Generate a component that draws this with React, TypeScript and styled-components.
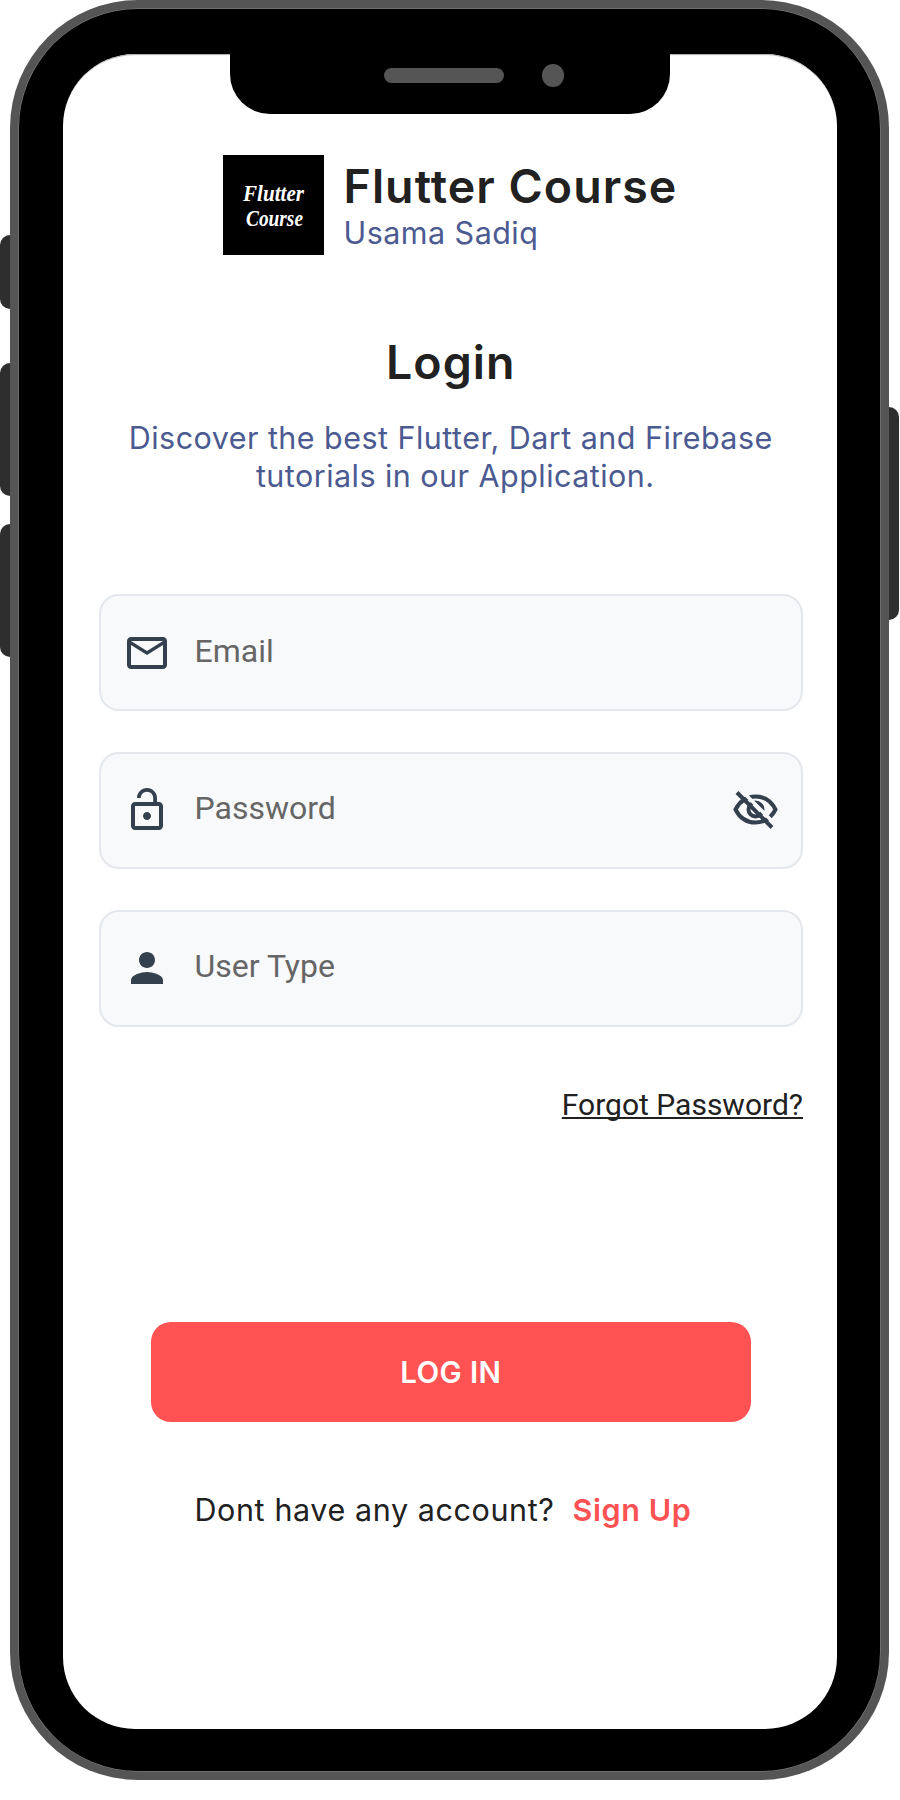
import React from "react";
import styled, { createGlobalStyle } from "styled-components";
import { MdOutlineEmail, MdLockOpen, MdPerson } from "react-icons/md";

const GlobalStyle = createGlobalStyle`
  * { box-sizing: border-box; }
  body { margin: 0; background: #fff; font-family: Roboto, "Liberation Sans", sans-serif; }
  p, h1, h2 { margin: 0; }
`;

const brandFont = `Inter, Roboto, sans-serif`;

const Stage = styled.main`
  position: relative;
  width: 900px;
  height: 1800px;
  padding-left: 9.5px;
  overflow: hidden;
`;

const SideButton = styled.span<{ $side: "left" | "right"; $top: number; $length: number }>`
  position: absolute;
  ${(p) => p.$side}: ${(p) => (p.$side === "left" ? "0" : "1px")};
  top: ${(p) => p.$top}px;
  width: 20px;
  height: ${(p) => p.$length}px;
  border-radius: 10px;
  background: #2e2e2e;
`;

const Phone = styled.div`
  position: relative;
  width: 879.5px;
  height: 1779.5px;
  padding: 9px;
  border-radius: 128px;
  background: #555;
`;

const Bezel = styled.div`
  height: 1761.5px;
  padding: 44.5px 43.5px 41.5px 44.5px;
  border-radius: 119px;
  background: #000;
  box-shadow: 0 0 0 0.5px #858585;
`;

const Screen = styled.div`
  position: relative;
  height: 1675.5px;
  padding: 101.5px 33.5px 0 35.5px;
  border-radius: 72px;
  background: #fff;
  display: flex;
  flex-direction: column;
  box-shadow: inset 0 2px 1px -1px #aaa;
`;

const Notch = styled.div`
  position: absolute;
  left: 166.5px;
  top: -2px;
  width: 440.5px;
  height: 62px;
  border-radius: 0 0 40px 40px;
  background: #000;
  display: flex;
  align-items: flex-start;
  padding: 16.5px 0 0 154px;
`;

const Speaker = styled.span`
  width: 120px;
  height: 15px;
  border-radius: 8px;
  background: #555;
`;

const Camera = styled.span`
  width: 22.5px;
  height: 22.5px;
  margin: -4px 0 0 38px;
  border-radius: 50%;
  background: #555;
`;

const Brand = styled.header`
  display: flex;
  height: 100px;
  padding-left: 124px;
`;

const Logo = styled.svg`
  width: 101px;
  height: 100px;
  background: #000;
  flex: none;
`;

const BrandText = styled.div`
  margin-left: 20px;
  padding-top: 3px;
  white-space: nowrap;
`;

const Heading = styled.h1`
  color: #212121;
  font-family: ${brandFont};
  font-size: 46.5px;
  line-height: 56px;
  font-weight: 600;
  letter-spacing: 1.05px;
`;

const Subtitle = styled.p`
  color: #4b5a91;
  font-family: ${brandFont};
  font-size: 30.5px;
  line-height: 38px;
  letter-spacing: 0.46px;
`;

const Intro = styled.section`
  margin-top: 79px;
  text-align: center;
  white-space: nowrap;
`;

const Description = styled(Subtitle)`
  margin-top: 29px;
`;

const ClosingLine = styled.span`
  padding-left: 9px;
`;

const Form = styled.form`
  margin-top: 99px;
  display: flex;
  flex-direction: column;
  gap: 40.5px;
`;

const Field = styled.label`
  height: 117.3px;
  border: 2px solid #e4e7eb;
  border-radius: 20px;
  background: #f8f9fb;
  color: #34404d;
  display: flex;
  align-items: center;
  padding: 0 22px;
`;

const FieldText = styled.span`
  flex: 1;
  margin: -4px 0 0 24px;
  color: #666;
  font-size: 32px;
  line-height: 40px;
`;

const Forgot = styled.a`
  align-self: flex-end;
  margin-top: 59px;
  color: #212121;
  font-size: 30px;
  line-height: 38px;
  text-decoration: underline;
  text-decoration-thickness: 1.5px;
  text-decoration-skip-ink: none;
  text-underline-offset: 2px;
`;

const Submit = styled.button`
  align-self: center;
  width: 600px;
  height: 100px;
  margin-top: 198px;
  border: 0;
  border-radius: 20px;
  background: #ff5353;
  color: #fff;
  font: 600 29.5px/38px ${brandFont};
  letter-spacing: 0.4px;
`;

const SignUpRow = styled.p`
  margin-top: 69px;
  padding-left: 96px;
  display: flex;
  gap: 18px;
  color: #212121;
  font-family: ${brandFont};
  font-size: 30.5px;
  line-height: 38px;
  white-space: nowrap;
  letter-spacing: 0.6px;
`;

const SignUp = styled.a`
  color: #ff5353;
  font-weight: 600;
`;

function HiddenEye() {
  return (
    <svg width="48" height="48" viewBox="0 0 48 48" fill="none" stroke="currentColor" strokeWidth="4">
      <mask id="slash-gap">
        <path d="M-4 -4H52V52H-4Z" fill="#fff" stroke="none" />
        <path d="M6 0L50 44" stroke="#000" strokeWidth="3.5" />
      </mask>
      <g mask="url(#slash-gap)">
        <path d="M4.500 23.500Q11 10.500 24.500 10.500Q38 10.500 44.500 23.500Q38 36.500 24.500 36.500Q11 36.500 4.500 23.500Z" />
        <circle cx="24.500" cy="23.500" r="7" />
        <path d="M26 17A6.500 6.500 0 0 1 31 23Z" fill="currentColor" stroke="none" />
      </g>
      <path d="M6 6.500L41 41.500" />
    </svg>
  );
}

export default function App() {
  return (
    <>
      <GlobalStyle />
      <Stage>
        <SideButton $side="left" $top={235} $length={74} />
        <SideButton $side="left" $top={363} $length={132.500} />
        <SideButton $side="left" $top={524} $length={132.500} />
        <SideButton $side="right" $top={406.500} $length={213} />
        <Phone>
          <Bezel>
            <Screen>
              <Notch>
                <Speaker />
                <Camera />
              </Notch>
              <Brand>
                <Logo viewBox="0 0 101 100">
                  <g fill="#fff" fontFamily="'Liberation Serif', serif" fontStyle="italic" fontWeight="700" fontSize="23">
                    <text x="20" y="46" textLength="61" lengthAdjust="spacingAndGlyphs">Flutter</text>
                    <text x="23" y="71" textLength="57" lengthAdjust="spacingAndGlyphs">Course</text>
                  </g>
                </Logo>
                <BrandText>
                  <Heading>Flutter Course</Heading>
                  <Subtitle>Usama Sadiq</Subtitle>
                </BrandText>
              </Brand>
              <Intro>
                <Heading as="h2">Login</Heading>
                <Description>
                  Discover the best Flutter, Dart and Firebase
                  <br />
                  <ClosingLine>tutorials in our Application.</ClosingLine>
                </Description>
              </Intro>
              <Form>
                <Field>
                  <MdOutlineEmail size={48} />
                  <FieldText>Email</FieldText>
                </Field>
                <Field>
                  <MdLockOpen size={48} />
                  <FieldText>Password</FieldText>
                  <HiddenEye />
                </Field>
                <Field>
                  <MdPerson size={48} />
                  <FieldText>User Type</FieldText>
                </Field>
              </Form>
              <Forgot>Forgot Password?</Forgot>
              <Submit>LOG IN</Submit>
              <SignUpRow>
                Dont have any account?
                <SignUp>Sign Up</SignUp>
              </SignUpRow>
            </Screen>
          </Bezel>
        </Phone>
      </Stage>
    </>
  );
}
